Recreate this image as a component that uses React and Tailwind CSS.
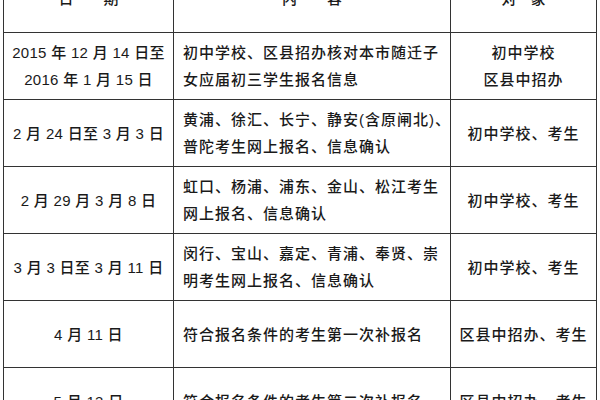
const ROWS = [
  {
    date: ["2015 年 12 月 14 日至", "2016 年 1 月 15 日"],
    content: ["初中学校、区县招办核对本市随迁子", "女应届初三学生报名信息"],
    target: ["初中学校", "区县中招办"],
  },
  {
    date: ["2 月 24 日至 3 月 3 日"],
    content: ["黄浦、徐汇、长宁、静安(含原闸北)、", "普陀考生网上报名、信息确认"],
    target: ["初中学校、考生"],
  },
  {
    date: ["2 月 29 月 3 月 8 日"],
    content: ["虹口、杨浦、浦东、金山、松江考生", "网上报名、信息确认"],
    target: ["初中学校、考生"],
  },
  {
    date: ["3 月 3 日至 3 月 11 日"],
    content: ["闵行、宝山、嘉定、青浦、奉贤、崇", "明考生网上报名、信息确认"],
    target: ["初中学校、考生"],
  },
  {
    date: ["4 月 11 日"],
    content: ["符合报名条件的考生第一次补报名"],
    target: ["区县中招办、考生"],
  },
  {
    date: ["5 月 13 日"],
    content: ["符合报名条件的考生第二次补报名"],
    target: ["区县中招办、考生"],
  },
];

function Lines({ lines }) {
  return lines.map((line, i) => (
    <div key={i} className="leading-[27px] whitespace-nowrap">
      {line}
    </div>
  ));
}

const cell = "border border-[#333] align-middle overflow-hidden";

export default function App() {
  return (
    <div
      className="w-[600px] h-[400px] overflow-hidden bg-white text-[#1a1a1a] text-[15px] font-medium"
      style={{ fontFamily: '"Liberation Sans", "Noto Sans CJK SC", sans-serif' }}
    >
      <table className="-mt-[35px] ml-[3px] w-[593px] table-fixed border-collapse">
        <colgroup>
          <col className="w-[170px]" />
          <col className="w-[277px]" />
          <col className="w-[146px]" />
        </colgroup>
        <tbody>
          <tr className="h-[67px]">
            <td className={cell}>
              <div className="flex justify-center gap-[30px]">
                <span>日</span>
                <span>期</span>
              </div>
            </td>
            <td className={cell}>
              <div className="flex justify-center gap-[30px]">
                <span>内</span>
                <span>容</span>
              </div>
            </td>
            <td className={cell}>
              <div className="flex justify-center gap-[14px]">
                <span>对</span>
                <span>象</span>
              </div>
            </td>
          </tr>
          {ROWS.map((row, idx) => (
            <tr key={idx} className="h-[67px]">
              <td className={cell + " text-center tracking-[0.3px]"}>
                <Lines lines={row.date} />
              </td>
              <td className={cell + " text-left pl-[9px] tracking-[1px]"}>
                <Lines lines={row.content} />
              </td>
              <td className={cell + " text-center tracking-[1px]"}>
                <Lines lines={row.target} />
              </td>
            </tr>
          ))}
        </tbody>
      </table>
    </div>
  );
}
